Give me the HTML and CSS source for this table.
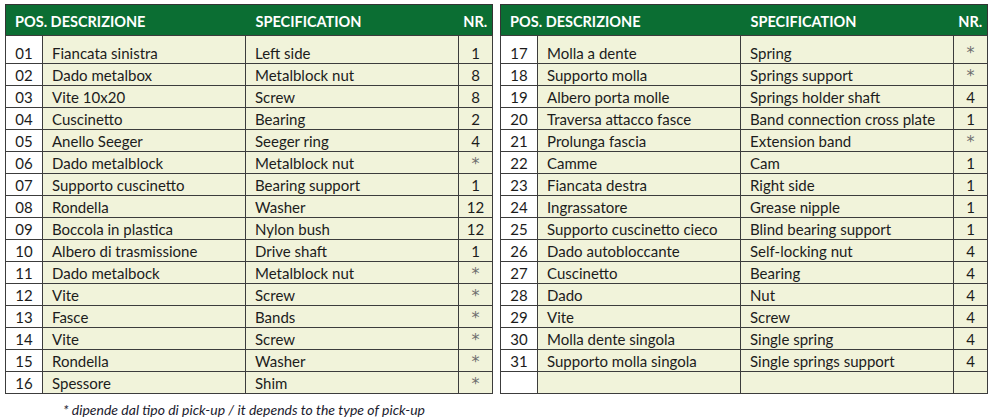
FILE: index.html
```html
<!DOCTYPE html>
<html lang="it">
<head>
<meta charset="utf-8">
<title>Distinta componenti</title>
<link rel="stylesheet" href="styles.css">
</head>
<body>
<div class="page">
  <div class="tables">
    <table class="parts">
      <colgroup><col class="c-pos"><col class="c-desc"><col class="c-spec"><col class="c-nr"></colgroup>
      <thead>
        <tr><th colspan="2" class="h-left">POS. DESCRIZIONE</th><th class="h-spec">SPECIFICATION</th><th class="h-nr">NR.</th></tr>
      </thead>
      <tbody>
        <tr class="first"><td class="pos">01</td><td>Fiancata sinistra</td><td>Left side</td><td class="nr">1</td></tr>
        <tr><td class="pos">02</td><td>Dado metalbox</td><td>Metalblock nut</td><td class="nr">8</td></tr>
        <tr><td class="pos">03</td><td>Vite 10x20</td><td>Screw</td><td class="nr">8</td></tr>
        <tr><td class="pos">04</td><td>Cuscinetto</td><td>Bearing</td><td class="nr">2</td></tr>
        <tr><td class="pos">05</td><td>Anello Seeger</td><td>Seeger ring</td><td class="nr">4</td></tr>
        <tr><td class="pos">06</td><td>Dado metalblock</td><td>Metalblock nut</td><td class="nr star">*</td></tr>
        <tr><td class="pos">07</td><td>Supporto cuscinetto</td><td>Bearing support</td><td class="nr">1</td></tr>
        <tr><td class="pos">08</td><td>Rondella</td><td>Washer</td><td class="nr">12</td></tr>
        <tr><td class="pos">09</td><td>Boccola in plastica</td><td>Nylon bush</td><td class="nr">12</td></tr>
        <tr><td class="pos">10</td><td>Albero di trasmissione</td><td>Drive shaft</td><td class="nr">1</td></tr>
        <tr><td class="pos">11</td><td>Dado metalbock</td><td>Metalblock nut</td><td class="nr star">*</td></tr>
        <tr><td class="pos">12</td><td>Vite</td><td>Screw</td><td class="nr star">*</td></tr>
        <tr><td class="pos">13</td><td>Fasce</td><td>Bands</td><td class="nr star">*</td></tr>
        <tr><td class="pos">14</td><td>Vite</td><td>Screw</td><td class="nr star">*</td></tr>
        <tr><td class="pos">15</td><td>Rondella</td><td>Washer</td><td class="nr star">*</td></tr>
        <tr><td class="pos">16</td><td>Spessore</td><td>Shim</td><td class="nr star">*</td></tr>
      </tbody>
    </table>
    <table class="parts">
      <colgroup><col class="c-pos"><col class="c-desc"><col class="c-spec"><col class="c-nr"></colgroup>
      <thead>
        <tr><th colspan="2" class="h-left">POS. DESCRIZIONE</th><th class="h-spec">SPECIFICATION</th><th class="h-nr">NR.</th></tr>
      </thead>
      <tbody>
        <tr class="first"><td class="pos">17</td><td>Molla a dente</td><td>Spring</td><td class="nr star">*</td></tr>
        <tr><td class="pos">18</td><td>Supporto molla</td><td>Springs support</td><td class="nr star">*</td></tr>
        <tr><td class="pos">19</td><td>Albero porta molle</td><td>Springs holder shaft</td><td class="nr">4</td></tr>
        <tr><td class="pos">20</td><td>Traversa attacco fasce</td><td>Band connection cross plate</td><td class="nr">1</td></tr>
        <tr><td class="pos">21</td><td>Prolunga fascia</td><td>Extension band</td><td class="nr star">*</td></tr>
        <tr><td class="pos">22</td><td>Camme</td><td>Cam</td><td class="nr">1</td></tr>
        <tr><td class="pos">23</td><td>Fiancata destra</td><td>Right side</td><td class="nr">1</td></tr>
        <tr><td class="pos">24</td><td>Ingrassatore</td><td>Grease nipple</td><td class="nr">1</td></tr>
        <tr><td class="pos">25</td><td>Supporto cuscinetto cieco</td><td>Blind bearing support</td><td class="nr">1</td></tr>
        <tr><td class="pos">26</td><td>Dado autobloccante</td><td>Self-locking nut</td><td class="nr">4</td></tr>
        <tr><td class="pos">27</td><td>Cuscinetto</td><td>Bearing</td><td class="nr">4</td></tr>
        <tr><td class="pos">28</td><td>Dado</td><td>Nut</td><td class="nr">4</td></tr>
        <tr><td class="pos">29</td><td>Vite</td><td>Screw</td><td class="nr">4</td></tr>
        <tr><td class="pos">30</td><td>Molla dente singola</td><td>Single spring</td><td class="nr">4</td></tr>
        <tr><td class="pos">31</td><td>Supporto molla singola</td><td>Single springs support</td><td class="nr">4</td></tr>
        <tr><td class="pos"></td><td></td><td></td><td class="nr"></td></tr>
      </tbody>
    </table>
  </div>
  <p class="note">* dipende dal tipo di pick-up / it depends to the type of pick-up</p>
</div>
</body>
</html>
```

FILE: styles.css
```css
html, body {
  margin: 0;
  padding: 0;
  background: #ffffff;
}

body {
  font-family: "Lato", "Open Sans", "Liberation Sans", sans-serif;
  color: #1c1c1c;
}

.page {
  padding: 4px 0 0 5px;
}

.tables {
  display: flex;
  gap: 7px;
  align-items: flex-start;
}

.parts {
  border-collapse: collapse;
  table-layout: fixed;
  width: 487px;
  border: 1.5px solid #343434;
  font-size: 15px;
}

.c-pos { width: 37px; }
.c-desc { width: 203px; }
.c-spec { width: 213px; }
.c-nr { width: 34px; }

.parts thead tr {
  background: #0b6e33;
  height: 31px;
}

.parts th {
  color: #ffffff;
  font-weight: 700;
  font-size: 14.5px;
  text-align: left;
  padding: 3px 0 0 0;
  border: none;
  white-space: nowrap;
}

.parts .h-left { padding-left: 9px; }
.parts .h-spec { padding-left: 10px; }
.parts .h-nr { text-align: center; padding-left: 0; }

.parts tbody tr {
  height: 22px;
  background: #f1f3da;
}

.parts tbody tr.first {
  height: 28px;
}

.parts tbody tr.first td {
  padding-top: 7px;
}

.parts td {
  border: 1.5px solid #3c3c3c;
  padding: 1px 0 0 9px;
  line-height: 18px;
  white-space: nowrap;
  overflow: hidden;
}

.parts td.pos {
  background: #ffffff;
  text-align: center;
  padding-left: 0;
}

.parts td.nr {
  text-align: center;
  padding-left: 0;
}

.parts td.star {
  color: #6e6e6e;
  font-family: "DejaVu Sans", sans-serif;
  font-size: 16px;
  vertical-align: top;
  padding-top: 3px;
}

.parts tbody tr.first td.star {
  padding-top: 8px;
}

.note {
  margin: 7px 0 0 58px;
  font-size: 14px;
  font-style: italic;
  color: #1b1b2e;
}
```
